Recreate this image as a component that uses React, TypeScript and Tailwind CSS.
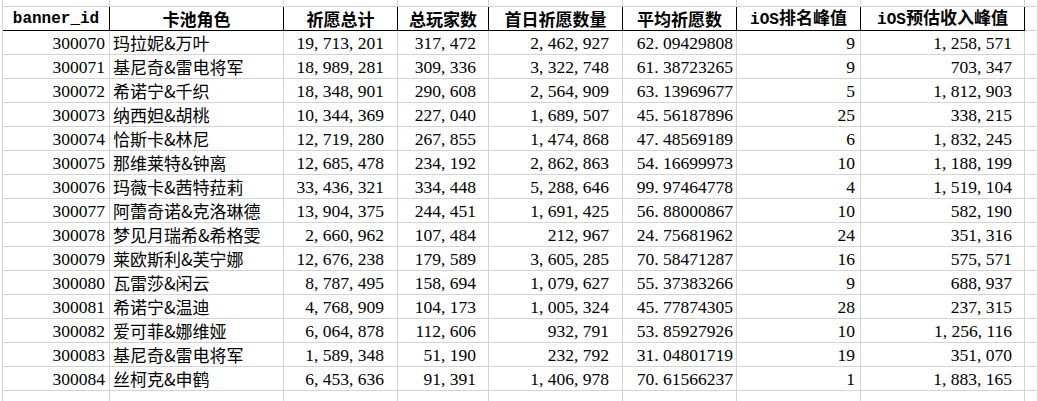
import React from "react";

const rows: [string, string, string, string, string, string, string, string][] = [
  ["300070", "玛拉妮&万叶", "19,713,201", "317,472", "2,462,927", "62.09429808", "9", "1,258,571"],
  ["300071", "基尼奇&雷电将军", "18,989,281", "309,336", "3,322,748", "61.38723265", "9", "703,347"],
  ["300072", "希诺宁&千织", "18,348,901", "290,608", "2,564,909", "63.13969677", "5", "1,812,903"],
  ["300073", "纳西妲&胡桃", "10,344,369", "227,040", "1,689,507", "45.56187896", "25", "338,215"],
  ["300074", "恰斯卡&林尼", "12,719,280", "267,855", "1,474,868", "47.48569189", "6", "1,832,245"],
  ["300075", "那维莱特&钟离", "12,685,478", "234,192", "2,862,863", "54.16699973", "10", "1,188,199"],
  ["300076", "玛薇卡&茜特菈莉", "33,436,321", "334,448", "5,288,646", "99.97464778", "4", "1,519,104"],
  ["300077", "阿蕾奇诺&克洛琳德", "13,904,375", "244,451", "1,691,425", "56.88000867", "10", "582,190"],
  ["300078", "梦见月瑞希&希格雯", "2,660,962", "107,484", "212,967", "24.75681962", "24", "351,316"],
  ["300079", "莱欧斯利&芙宁娜", "12,676,238", "179,589", "3,605,285", "70.58471287", "16", "575,571"],
  ["300080", "瓦雷莎&闲云", "8,787,495", "158,694", "1,079,627", "55.37383266", "9", "688,937"],
  ["300081", "希诺宁&温迪", "4,768,909", "104,173", "1,005,324", "45.77874305", "28", "237,315"],
  ["300082", "爱可菲&娜维娅", "6,064,878", "112,606", "932,791", "53.85927926", "10", "1,256,116"],
  ["300083", "基尼奇&雷电将军", "1,589,348", "51,190", "232,792", "31.04801719", "19", "351,070"],
  ["300084", "丝柯克&申鹤", "6,453,636", "91,391", "1,406,978", "70.61566237", "1", "1,883,165"],
];

const GRID =
  "grid grid-cols-[107px_174px_114px_91px_134px_114px_124px_164px_1fr]";

function Num({ v }: { v: string }) {
  return (
    <span className="whitespace-nowrap">
      {v.split("").map((c, i) =>
        c === "," || c === "." ? (
          <span key={i} className="inline-block w-[0.5em]">
            {c}
          </span>
        ) : (
          <React.Fragment key={i}>{c}</React.Fragment>
        )
      )}
    </span>
  );
}

const numFont = "font-['Liberation_Serif','Noto_Sans_CJK_SC',serif] text-[17.5px]";
const cjkFont = "font-['Noto_Sans_CJK_SC',sans-serif] text-[17px]";

function HeadCell({ children, last }: { children: React.ReactNode; last?: boolean }) {
  return (
    <div
      className={`h-[24px] leading-[20px] flex items-center justify-center border-b border-b-black ${
        last ? "border-r border-r-[#d4d4d4]" : "border-r border-r-black"
      } font-bold text-black whitespace-nowrap`}
    >
      {children}
    </div>
  );
}

function Cell({
  children,
  align = "right",
  pad = "pr-[4px]",
  font = numFont,
}: {
  children?: React.ReactNode;
  align?: "left" | "right";
  pad?: string;
  font?: string;
}) {
  return (
    <div
      className={`h-[24px] leading-[20px] flex items-center border-r border-b border-[#d4d4d4] overflow-hidden whitespace-nowrap text-black ${font} ${
        align === "right" ? `justify-end ${pad}` : "justify-start pl-[3px]"
      }`}
    >
      {children}
    </div>
  );
}

export default function App() {
  const mono = "font-['Liberation_Mono',monospace] text-[16px] leading-[20px]";
  const cjkB = "font-['Noto_Sans_CJK_SC',sans-serif] text-[17px] leading-[20px]";
  return (
    <div className="w-[1038px] h-[401px] overflow-hidden bg-white pl-[2px]">
      <div className={`${GRID} border-l border-[#d4d4d4]`}>
        {Array.from({ length: 9 }).map((_, i) => (
          <div key={`t${i}`} className="h-[7px] border-r border-b border-[#d4d4d4]" />
        ))}
        <HeadCell>
          <span className={mono}>banner_id</span>
        </HeadCell>
        <HeadCell>
          <span className={cjkB}>卡池角色</span>
        </HeadCell>
        <HeadCell>
          <span className={cjkB}>祈愿总计</span>
        </HeadCell>
        <HeadCell>
          <span className={cjkB}>总玩家数</span>
        </HeadCell>
        <HeadCell>
          <span className={cjkB}>首日祈愿数量</span>
        </HeadCell>
        <HeadCell>
          <span className={cjkB}>平均祈愿数</span>
        </HeadCell>
        <HeadCell>
          <span className={cjkB}>
            <span className={mono}>iOS</span>排名峰值
          </span>
        </HeadCell>
        <HeadCell>
          <span className={cjkB}>
            <span className={mono}>iOS</span>预估收入峰值
          </span>
        </HeadCell>
        <div className="h-[24px] border-r border-b border-[#d4d4d4]" />

        {rows.map((r) => (
          <React.Fragment key={r[0]}>
            <Cell>
              <Num v={r[0]} />
            </Cell>
            <Cell align="left" font={cjkFont}>
              {r[1]}
            </Cell>
            <Cell pad="pr-[13px]">
              <Num v={r[2]} />
            </Cell>
            <Cell pad="pr-[12px]">
              <Num v={r[3]} />
            </Cell>
            <Cell pad="pr-[13px]">
              <Num v={r[4]} />
            </Cell>
            <Cell pad="pr-[3px]">
              <Num v={r[5]} />
            </Cell>
            <Cell pad="pr-[5px]">
              <Num v={r[6]} />
            </Cell>
            <Cell pad="pr-[12px]">
              <Num v={r[7]} />
            </Cell>
            <Cell />
          </React.Fragment>
        ))}
        {Array.from({ length: 9 }).map((_, i) => (
          <div key={`b${i}`} className="h-[24px] border-r border-b border-[#d4d4d4]" />
        ))}
      </div>
    </div>
  );
}
